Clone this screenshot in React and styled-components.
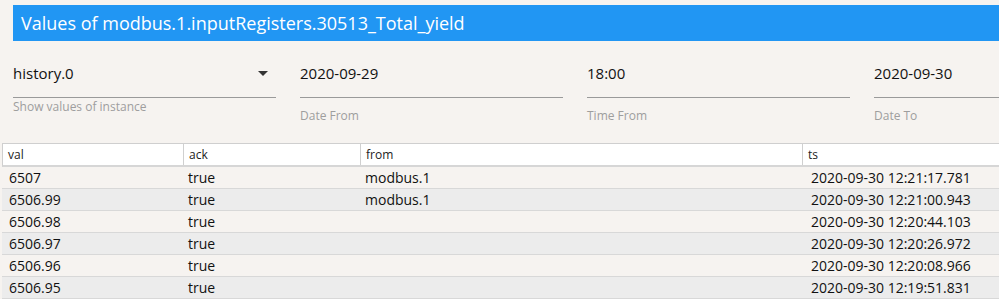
import styled, { createGlobalStyle } from "styled-components";

const Global = createGlobalStyle`
  html, body {
    margin: 0;
    padding: 0;
    background: #f6f3f0;
    font-family: "Open Sans", "Noto Sans", sans-serif;
    overflow: hidden;
  }
`;

const Page = styled.div`
  width: 999px;
  height: 299px;
  overflow: hidden;
  padding-top: 5px;
  box-sizing: border-box;
`;

const Title = styled.div`
  margin-left: 13px;
  height: 36px;
  background: #2196f3;
  color: #fff;
  font-size: 18px;
  line-height: 36px;
  padding-left: 8px;
  white-space: nowrap;
`;

const Form = styled.div`
  display: flex;
  gap: 24px;
  margin-left: 13px;
  margin-top: 16px;
  height: 86px;
`;

const Field = styled.div`
  flex: 0 0 263px;
  display: flex;
  flex-direction: column;
`;

const Input = styled.div`
  height: 41px;
  padding-bottom: 8px;
  border-bottom: 1px solid #9a9a9a;
  display: flex;
  align-items: center;
  justify-content: space-between;
  font-size: 15px;
  color: #111;
  box-sizing: border-box;
`;

const Caret = styled.span`
  width: 0;
  height: 0;
  border-left: 5px solid transparent;
  border-right: 5px solid transparent;
  border-top: 5px solid #333;
  margin-right: 8px;
`;

const Helper = styled.div`
  font-size: 12px;
  color: #9e9e9e;
  margin-top: ${(p) => (p.$low ? "9px" : "0")};
`;

const Table = styled.div`
  margin-left: 2px;
  width: 1100px;
`;

const Row = styled.div`
  display: grid;
  grid-template-columns: 180px 177px 442px 1fr;
  height: 22px;
  box-sizing: border-box;
  border-bottom: 1px solid #d8d8d8;
  background: ${(p) => (p.$even ? "#ececec" : "#f6f3f0")};
`;

const Header = styled(Row)`
  height: 24px;
  background: #fff;
  border: 1px solid #cfcfcf;
  border-bottom: 2px solid #d6d6d6;
`;

const HeadCell = styled.div`
  font-size: 12px;
  line-height: 21px;
  padding-left: 5px;
  color: #222;
  border-left: ${(p) => (p.$first ? "none" : "1px solid #d0d0d0")};
`;

const Cell = styled.div`
  font-size: 14px;
  line-height: 21px;
  padding-left: ${(p) => p.$pad}px;
  color: #111;
  white-space: nowrap;
`;

const pads = [7, 6, 6, 10];

const rows = [
  ["6507", "true", "modbus.1", "2020-09-30 12:21:17.781"],
  ["6506.99", "true", "modbus.1", "2020-09-30 12:21:00.943"],
  ["6506.98", "true", "", "2020-09-30 12:20:44.103"],
  ["6506.97", "true", "", "2020-09-30 12:20:26.972"],
  ["6506.96", "true", "", "2020-09-30 12:20:08.966"],
  ["6506.95", "true", "", "2020-09-30 12:19:51.831"],
];

export default function App() {
  return (
    <Page>
      <Global />
      <Title>Values of modbus.1.inputRegisters.30513_Total_yield</Title>
      <Form>
        <Field>
          <Input>
            history.0
            <Caret />
          </Input>
          <Helper>Show values of instance</Helper>
        </Field>
        <Field>
          <Input>2020-09-29</Input>
          <Helper $low>Date From</Helper>
        </Field>
        <Field>
          <Input>18:00</Input>
          <Helper $low>Time From</Helper>
        </Field>
        <Field>
          <Input>2020-09-30</Input>
          <Helper $low>Date To</Helper>
        </Field>
      </Form>
      <Table>
        <Header>
          <HeadCell $first>val</HeadCell>
          <HeadCell>ack</HeadCell>
          <HeadCell>from</HeadCell>
          <HeadCell>ts</HeadCell>
        </Header>
        {rows.map((r, i) => (
          <Row key={i} $even={i % 2 === 1}>
            {r.map((c, j) => (
              <Cell key={j} $pad={pads[j]}>
                {c}
              </Cell>
            ))}
          </Row>
        ))}
      </Table>
    </Page>
  );
}
